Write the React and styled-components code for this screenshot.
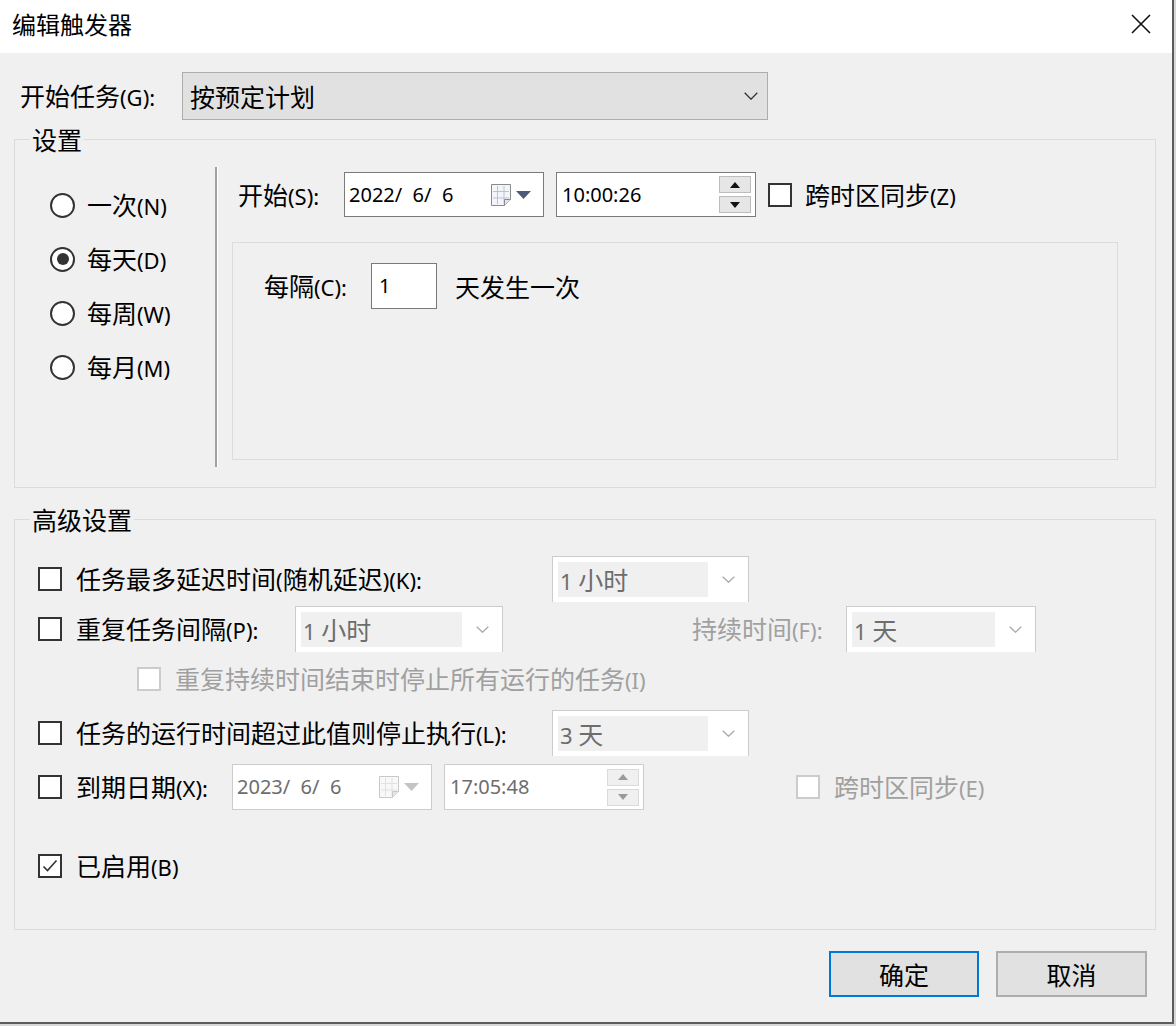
import React from "react";
import styled, { createGlobalStyle } from "styled-components";

const GlobalStyle = createGlobalStyle`
  * { box-sizing: border-box; }
  html, body {
    margin: 0;
    padding: 0;
    background: #d8d8d8;
  }
  body {
    font-family: "Noto Sans CJK SC", "Noto Sans", sans-serif;
    font-size: 25px;
    line-height: 30px;
    color: #000;
  }
`;

const Window = styled.div`
  width: 1174px;
  height: 1024px;
  background: #f0f0f0;
  border-right: 2px solid #5c5c5c;
  border-bottom: 2px solid #5c5c5c;
  display: flex;
  flex-direction: column;
`;

const TitleBar = styled.div`
  height: 53px;
  flex-shrink: 0;
  background: #fff;
  display: flex;
  align-items: center;
  justify-content: space-between;
  padding: 0 21px 6px 12px;
  font-size: 24px;
`;

const Body = styled.div`
  padding: 19px 16px 0 14px;
`;

const Lat = styled.span`
  font-family: "Noto Sans", sans-serif;
  font-size: 22px;
`;

const FieldText = styled.span`
  font-family: "Noto Sans", sans-serif;
  font-size: 20px;
  white-space: pre;
`;

// Latin parts of YaHei UI labels are narrower than the CJK glyphs
function T({ children }) {
  const parts = String(children).split(/([^\u3000-\u9fff\uff00-\uffef]+)/);
  return (
    <span>
      {parts.map((p, i) => (i % 2 ? <Lat key={i}>{p}</Lat> : p))}
    </span>
  );
}

const TaskRow = styled.div`
  display: flex;
  align-items: center;
  height: 48px;
  padding-left: 6px;
`;

const Label = styled.div`
  flex-shrink: 0;
  width: ${(p) => (p.$w ? `${p.$w}px` : "auto")};
  margin-left: ${(p) => p.$ml || 0}px;
  color: ${(p) => (p.$disabled ? "#a0a0a0" : "#000")};
  white-space: pre;
`;

const Combo = styled.div`
  width: ${(p) => p.$w}px;
  height: 48px;
  background: #e1e1e1;
  border: 1px solid #adadad;
  display: flex;
  align-items: center;
  justify-content: space-between;
  padding: 0 9px 0 7px;
`;

const Group = styled.fieldset`
  margin: ${(p) => p.$mt}px 0 0;
  padding: 0;
  min-width: 0;
  border: 1px solid #dcdcdc;
`;

const Legend = styled.legend`
  margin-left: 15px;
  padding: 0 2px;
  line-height: 30px;
`;

const SettingsBody = styled.div`
  display: flex;
  padding: 13px 37px 20px 0;
`;

const RadioCol = styled.div`
  width: 200px;
  padding: 11px 0 0 35px;
  display: flex;
  flex-direction: column;
`;

const RadioItem = styled.div`
  height: 54px;
  display: flex;
  align-items: center;
  gap: 12px;
`;

const RadioCircle = styled.span`
  width: 25px;
  height: 25px;
  border-radius: 50%;
  border: 2px solid #333;
  background: #fff;
  display: flex;
  align-items: center;
  justify-content: center;
  &::after {
    content: "";
    display: ${(p) => (p.$on ? "block" : "none")};
    width: 12px;
    height: 12px;
    border-radius: 50%;
    background: #333;
  }
`;

const Separator = styled.div`
  width: 3px;
  height: 300px;
  flex-shrink: 0;
  border-left: 2px solid #a0a0a0;
  border-right: 1px solid #fff;
`;

const RightCol = styled.div`
  flex: 1;
  padding: 5px 0 0 14px;
  display: flex;
  flex-direction: column;
`;

const FieldRow = styled.div`
  display: flex;
  align-items: center;
  height: ${(p) => p.$h || 46}px;
  margin-top: ${(p) => p.$mt || 0}px;
  padding-left: ${(p) => p.$pl || 0}px;
`;

const DateBox = styled.div`
  width: 200px;
  height: ${(p) => p.$h}px;
  flex-shrink: 0;
  background: #fff;
  border: 1px solid ${(p) => (p.$disabled ? "#cccccc" : "#7a7a7a")};
  color: ${(p) => (p.$disabled ? "#6d6d6d" : "#000")};
  display: flex;
  align-items: center;
  justify-content: space-between;
  padding: 0 ${(p) => p.$pr}px 0 ${(p) => p.$pl}px;
  margin-left: ${(p) => p.$ml || 0}px;
`;

const PickerIcons = styled.div`
  display: flex;
  align-items: center;
  gap: 5px;
`;

const Spinner = styled.div`
  display: flex;
  flex-direction: column;
  gap: 3px;
`;

const SpinButton = styled.div`
  width: 32px;
  height: 17px;
  background: ${(p) => (p.$disabled ? "#f0f0f0" : "#e6e6e6")};
  border: 1px solid ${(p) => (p.$disabled ? "#dadada" : "#bdbdbd")};
  display: flex;
  align-items: center;
  justify-content: center;
`;

const Box = styled.span`
  width: 24px;
  height: 24px;
  flex-shrink: 0;
  background: #fff;
  border: 2px solid ${(p) => (p.$disabled ? "#cccccc" : "#333")};
  margin-left: ${(p) => p.$ml || 0}px;
  display: inline-flex;
  align-items: center;
  justify-content: center;
`;

const Panel = styled.div`
  margin-top: 25px;
  height: 218px;
  border: 1px solid #dcdcdc;
  padding: 20px 30px;
`;

const CountInput = styled.div`
  width: 66px;
  height: 46px;
  background: #fff;
  border: 1px solid #7a7a7a;
  padding: 3px 0 0 7px;
`;

const AdvBody = styled.div`
  padding: 22px 0 40px 23px;
`;

const DisCombo = styled.div`
  width: ${(p) => p.$w}px;
  height: 46px;
  flex-shrink: 0;
  background: #fff;
  border: 1px solid #cccccc;
  border-bottom: none;
  display: flex;
  padding: 5px 0 5px 5px;
`;

const DisComboText = styled.div`
  flex: 1;
  background: #f0f0f0;
  color: #6d6d6d;
  display: flex;
  align-items: center;
  padding-left: 2px;
  white-space: pre;
`;

const ChevronCell = styled.div`
  width: 40px;
  display: flex;
  align-items: center;
  justify-content: center;
`;

const ButtonBar = styled.div`
  display: flex;
  justify-content: flex-end;
  gap: 17px;
  margin-top: 21px;
  padding-right: 9px;
`;

const Button = styled.button`
  width: ${(p) => p.$w}px;
  height: 46px;
  padding: 0;
  background: #e1e1e1;
  border: 2px solid ${(p) => (p.$primary ? "#0078d7" : "#adadad")};
  font: inherit;
  color: #000;
`;

const CloseIcon = () => (
  <svg width="20" height="20" viewBox="0 0 20 20">
    <path d="M1 1L19 19M19 1L1 19" stroke="#111" strokeWidth="1.6" fill="none" />
  </svg>
);

const Chevron = ({ color = "#333", w = 14, h = 8 }) => (
  <svg width={w} height={h} viewBox={`0 0 ${w} ${h}`}>
    <path d={`M0.7 0.7L${w / 2} ${h - 0.8}L${w - 0.7} 0.7`} stroke={color} strokeWidth="1.3" fill="none" />
  </svg>
);

const CalendarIcon = ({ disabled }) => {
  const edge = disabled ? "#c8c8c8" : "#8a8a8a";
  const grid = disabled ? "#dde1e8" : "#b8c3d8";
  return (
    <svg width="20" height="22" viewBox="0 0 20 22">
      <path d="M0.5 0.5H19.5V15.5L13.5 21.5H0.5Z" fill={disabled ? "#f8f8f8" : "#f3f5fa"} stroke={edge} />
      <path d="M6.5 2V20M13 2V20M2 7.5H18M2 14H18" stroke={grid} />
      <path d="M13.5 21.5V15.5H19.5" fill="#e4e4e4" stroke={edge} />
    </svg>
  );
};

const DropTriangle = ({ disabled }) => (
  <svg width="15" height="8" viewBox="0 0 15 8">
    <path d="M0 0H15L7.5 8Z" fill={disabled ? "#c4c4c4" : "#4e5b78"} />
  </svg>
);

const SpinArrow = ({ up, disabled }) => (
  <svg width="10" height="6" viewBox="0 0 10 6">
    <path d={up ? "M0 6H10L5 0Z" : "M0 0H10L5 6Z"} fill={disabled ? "#9a9a9a" : "#111"} />
  </svg>
);

const CheckMark = () => (
  <svg width="16" height="14" viewBox="0 0 16 14">
    <path d="M1.5 7.5L5.5 11.5L14.5 1.5" stroke="#333" strokeWidth="1.6" fill="none" />
  </svg>
);

function Radio({ on, children }) {
  return (
    <RadioItem>
      <RadioCircle $on={on} />
      <T>{children}</T>
    </RadioItem>
  );
}

function DatePicker({ value, disabled, h }) {
  return (
    <DateBox $disabled={disabled} $h={h} $pl={4} $pr={12}>
      <FieldText>{value}</FieldText>
      <PickerIcons>
        <CalendarIcon disabled={disabled} />
        <DropTriangle disabled={disabled} />
      </PickerIcons>
    </DateBox>
  );
}

function TimePicker({ value, disabled, h }) {
  return (
    <DateBox $disabled={disabled} $h={h} $pl={5} $pr={4} $ml={12}>
      <FieldText>{value}</FieldText>
      <Spinner>
        <SpinButton $disabled={disabled}>
          <SpinArrow up disabled={disabled} />
        </SpinButton>
        <SpinButton $disabled={disabled}>
          <SpinArrow disabled={disabled} />
        </SpinButton>
      </Spinner>
    </DateBox>
  );
}

function DisSelect({ w, value }) {
  return (
    <DisCombo $w={w}>
      <DisComboText>
        <T>{value}</T>
      </DisComboText>
      <ChevronCell>
        <Chevron color="#a8a8a8" w={13} h={7} />
      </ChevronCell>
    </DisCombo>
  );
}

export default function App() {
  return (
    <>
      <GlobalStyle />
      <Window>
        <TitleBar>
          <span>编辑触发器</span>
          <CloseIcon />
        </TitleBar>
        <Body>
          <TaskRow>
            <Label $w={162}>
              <T>开始任务(G):</T>
            </Label>
            <Combo $w={586}>
              <span>按预定计划</span>
              <Chevron />
            </Combo>
          </TaskRow>

          <Group $mt={4}>
            <Legend>设置</Legend>
            <SettingsBody>
              <RadioCol>
                <Radio>一次(N)</Radio>
                <Radio on>每天(D)</Radio>
                <Radio>每周(W)</Radio>
                <Radio>每月(M)</Radio>
              </RadioCol>
              <Separator />
              <RightCol>
                <FieldRow $h={45}>
                  <Label $w={106} $ml={6}>
                    <T>开始(S):</T>
                  </Label>
                  <DatePicker value="2022/  6/  6" h={45} />
                  <TimePicker value="10:00:26" h={45} />
                  <Box $ml={12} />
                  <Label $ml={13}>
                    <T>跨时区同步(Z)</T>
                  </Label>
                </FieldRow>
                <Panel>
                  <FieldRow>
                    <Label $w={107} $ml={1}>
                      <T>每隔(C):</T>
                    </Label>
                    <CountInput>
                      <FieldText>1</FieldText>
                    </CountInput>
                    <Label $ml={18}>天发生一次</Label>
                  </FieldRow>
                </Panel>
              </RightCol>
            </SettingsBody>
          </Group>

          <Group $mt={16}>
            <Legend>高级设置</Legend>
            <AdvBody>
              <FieldRow>
                <Box />
                <Label $w={476} $ml={14}>
                  <T>任务最多延迟时间(随机延迟)(K):</T>
                </Label>
                <DisSelect w={197} value="1 小时" />
              </FieldRow>
              <FieldRow $mt={4}>
                <Box />
                <Label $w={219} $ml={14}>
                  <T>重复任务间隔(P):</T>
                </Label>
                <DisSelect w={208} value="1 小时" />
                <Label $w={154} $ml={189} $disabled>
                  <T>持续时间(F):</T>
                </Label>
                <DisSelect w={190} value="1 天" />
              </FieldRow>
              <FieldRow $mt={4} $pl={99}>
                <Box $disabled />
                <Label $ml={14} $disabled>
                  <T>重复持续时间结束时停止所有运行的任务(I)</T>
                </Label>
              </FieldRow>
              <FieldRow $mt={8}>
                <Box />
                <Label $w={476} $ml={14}>
                  <T>任务的运行时间超过此值则停止执行(L):</T>
                </Label>
                <DisSelect w={197} value="3 天" />
              </FieldRow>
              <FieldRow $mt={8}>
                <Box />
                <Label $w={156} $ml={14}>
                  <T>到期日期(X):</T>
                </Label>
                <DatePicker value="2023/  6/  6" disabled h={46} />
                <TimePicker value="17:05:48" disabled h={46} />
                <Box $disabled $ml={152} />
                <Label $ml={14} $disabled>
                  <T>跨时区同步(E)</T>
                </Label>
              </FieldRow>
              <FieldRow $mt={33}>
                <Box>
                  <CheckMark />
                </Box>
                <Label $ml={14}>
                  <T>已启用(B)</T>
                </Label>
              </FieldRow>
            </AdvBody>
          </Group>

          <ButtonBar>
            <Button $w={150} $primary>
              确定
            </Button>
            <Button $w={151}>取消</Button>
          </ButtonBar>
        </Body>
      </Window>
    </>
  );
}
